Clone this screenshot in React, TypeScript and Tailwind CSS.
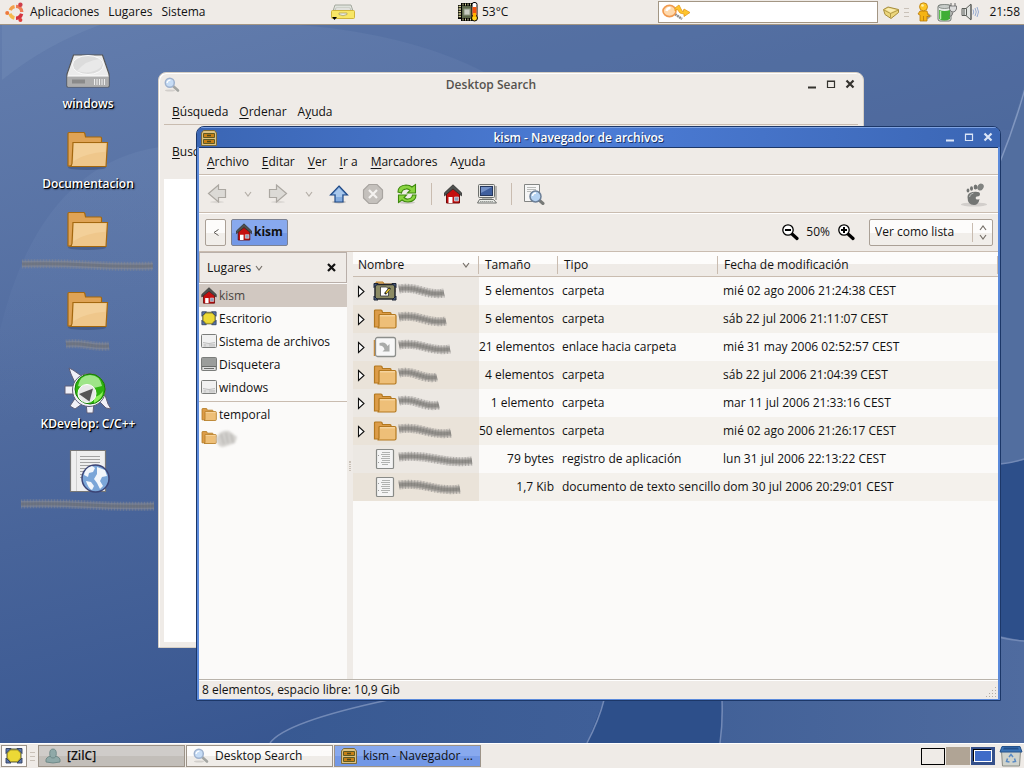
import { useState } from "react";
import type { ReactNode } from "react";

type IconProps = { className?: string };

/* ---------- icons ---------- */

function UbuntuLogo() {
  return (
    <svg viewBox="0 0 20 20" className="size-5" aria-hidden="true">
      <g fill="none" strokeWidth="3.4">
        <path d="M5.2 8.2A6 6 0 0 1 9.6 4.6" stroke="#f3a04a" />
        <path d="M11 4.400A6 6 0 0 1 16.8 10" stroke="#ee7d55" />
        <path d="M16.6 11.8A6 6 0 0 1 11 16.2" stroke="#d5333f" />
        <path d="M9.4 16A6 6 0 0 1 5 11.6" stroke="#f5b94d" />
      </g>
      <circle cx="2.2" cy="11" r="2" fill="#ee7a3c" />
      <circle cx="15.4" cy="2.8" r="2.2" fill="#cf3f4a" />
      <circle cx="15.4" cy="18" r="2" fill="#e03f3a" />
    </svg>
  );
}

function DrawerIcon() {
  return (
    <svg viewBox="0 0 24 16" className="h-4 w-6" aria-hidden="true">
      <path d="M4 1h16l2 6H2z" fill="#dfe3dc" stroke="#a5a99f" />
      <path d="M5 4h14l1 2H4z" fill="#fafafa" stroke="#a8a8a0" strokeWidth=".6" />
      <rect x=".5" y="6.500" width="23" height="8" rx="1" fill="#f8e665" stroke="#d0b43a" />
      <path d="M8 9h8v1.500q-4 2.500-8 0z" fill="#e9ebe4" stroke="#a69a50" strokeWidth=".7" />
      <path d="M1 13h5l-2.500 3z" fill="#000" />
    </svg>
  );
}

function CpuIcon() {
  return (
    <svg viewBox="0 0 22 20" className="h-5 w-[22px]" aria-hidden="true">
      <rect x="1" y="3" width="15" height="14" fill="#000" />
      <path d="M1.500 4.500h3M1.500 7h3M1.500 9.500h3M1.500 12h3M1.500 14.500h3" stroke="#d8d49a" strokeWidth="1.400" />
      <rect x="4" y="1" width="12" height="18" fill="#000" />
      <path d="M6 1.500v2M8.500 1.500v2M11 1.500v2M13.500 1.500v2M6 16.500v2M8.500 16.500v2M11 16.500v2M13.500 16.500v2" stroke="#d8d49a" />
      <rect x="5" y="4" width="10.500" height="12" fill="#5c684a" />
      <rect x="7" y="7" width="6" height="6" fill="#c9cdc2" stroke="#8c947f" />
      <rect x="15" y=".5" width="5" height="15" rx="2" fill="#fff" stroke="#000" />
      <path d="M17.500 5v9" stroke="#f0540f" strokeWidth="4" />
      <circle cx="17.500" cy="16" r="3" fill="#ffd21a" stroke="#000" />
      <path d="M17.500 11v4" stroke="#ffb300" strokeWidth="3" />
    </svg>
  );
}

function DeskbarIcon() {
  return (
    <svg viewBox="0 0 30 18" className="h-[18px] w-[30px]" aria-hidden="true">
      <path d="M13 11l7 5" stroke="#8d8d8d" strokeWidth="2.500" strokeDasharray="2 .6" />
      <ellipse cx="7.500" cy="8" rx="6.500" ry="5.600" fill="#ffd9ac" stroke="#f09a50" strokeWidth="1.600" />
      <path d="M4.500 8a4 4 0 0 1 4-3" stroke="#fff" strokeWidth="2.500" fill="none" />
      <path d="M13 5l4-3 2 4 2 3 1-3 6 3.500-6 4v-2.500l-4-1-3-4-2 2z" fill="#ffc62e" stroke="#e59a1c" strokeWidth=".8" />
    </svg>
  );
}

function EnvelopeIcon() {
  return (
    <svg viewBox="0 0 16 13" className="h-[13px] w-4" aria-hidden="true">
      <path d="M.5 3.500L5 1l10.500 2.500v3L8 12.500 2 8.500z" fill="#ecd67c" stroke="#a58c3c" />
      <path d="M1 4l6.500 3.500 8-3.500M7.500 7.500v4" fill="none" stroke="#a58c3c" strokeWidth=".8" />
      <path d="M2.500 3.500L5.500 2l7.500 2-5.500 2.500z" fill="#f9ecb0" />
    </svg>
  );
}

function PersonIcon() {
  return (
    <svg viewBox="0 0 16 20" className="h-5 w-4" aria-hidden="true">
      <path d="M6 19q5-1 9-5l-4-3z" fill="#8b8578" opacity=".7" />
      <path d="M3 9h7l1 4 2 1-2 1-1-1v5H3v-6l-2-1z" fill="#f5b414" stroke="#b8790a" strokeWidth=".8" />
      <circle cx="6.500" cy="4.800" r="4" fill="#fdc625" stroke="#b8790a" strokeWidth=".8" />
      <circle cx="5.500" cy="3.500" r="1.300" fill="#fff1a8" />
      <path d="M6.500 14v5" stroke="#c4860c" />
    </svg>
  );
}

function BatteryIcon() {
  return (
    <svg viewBox="0 0 20 20" className="size-5" aria-hidden="true">
      <rect x="1" y="3" width="13" height="16" rx="2" fill="#e9ebe9" stroke="#6f7670" />
      <path d="M2 8q5.500 2 11 0v9q-5.500 3-11 0z" fill="#3fae35" />
      <path d="M3.500 9v8" stroke="#b8efac" strokeWidth="1.500" />
      <ellipse cx="7.500" cy="4.500" rx="6" ry="2" fill="#c8ccc9" stroke="#6f7670" strokeWidth=".7" />
      <path d="M14 1v3M18 1v3" stroke="#666" />
      <path d="M12.500 4h7v3q-1 3-3.500 3t-3.500-3z" fill="#dcdcdc" stroke="#666" strokeWidth=".8" />
      <path d="M16 10q0 4-4 5" fill="none" stroke="#777" />
    </svg>
  );
}

function SpeakerIcon() {
  return (
    <svg viewBox="0 0 18 18" className="size-[18px]" aria-hidden="true">
      <path d="M1 5.500h4l5-4.500v16l-5-4.500H1z" fill="#e2e4e1" stroke="#5a5d58" />
      <path d="M3 6v6M5.500 5.500v7M10 2v14" stroke="#5a5d58" />
      <path d="M12 6.500q1.500 2.500 0 5M14 5q2.500 4 0 8M16 4q3 5 0 10" fill="none" stroke="#8ba3cd" strokeWidth=".9" />
    </svg>
  );
}

function DriveIcon() {
  return (
    <svg viewBox="0 0 48 48" className="size-12" aria-hidden="true">
      <path d="M9.500 8h29L45 27v12q0 1-1 1H4q-1 0-1-1V27z" fill="#ececec" stroke="#565656" strokeWidth="1.200" />
      <ellipse cx="24" cy="18" rx="15.500" ry="9.500" fill="#dcdcdc" stroke="#fafafa" />
      <path d="M13 24Q22 13 36 12q4 5 0 9-10 7-23 3z" fill="#e9e9e9" />
      <path d="M3.500 29h41v10.500h-41z" fill="#aeaeae" />
      <path d="M3.500 29h41" stroke="#fff" />
      <path d="M8 32.500h13v4H8z" fill="#8a8a8a" />
      <path d="M30.500 32v6M33 32v6M35.500 32v6M38 32v6M40.500 32v6" stroke="#eee" />
    </svg>
  );
}

function FolderIcon({ className }: IconProps) {
  return (
    <svg viewBox="0 0 48 48" className={className} aria-hidden="true">
      <ellipse cx="23" cy="40.500" rx="19" ry="2.500" fill="#20304f" opacity=".3" />
      <path d="M4 39V6.500q0-1 1-1h14.500q1 0 1.300 1l.7 3.500H36.500q1 0 1 1V39z" fill="#dfa355" stroke="#a4680f" strokeWidth="1.200" />
      <path d="M9 15.500h34.500L42 39.500H5.500q2.500-1 2.500-3z" fill="#efc78b" stroke="#a4680f" strokeWidth="1.200" />
      <path d="M10 16.800h32l-.6 8Q22 26 9.500 34z" fill="#f5d5a3" opacity=".6" />
    </svg>
  );
}

function SmallFolder({ className }: IconProps) {
  return (
    <svg viewBox="0 0 24 22" className={className} aria-hidden="true">
      <path d="M1.500 19V3q0-1 1-1H8q1 0 1 1l.5 1.500H17q1 0 1 1V19z" fill="#dc9c48" stroke="#b3781f" strokeWidth="1.200" />
      <path d="M6.500 6.500h15q1.500 0 1.500 1.500V18.500q0 1.500-1.500 1.500H4.500Q6 19.500 6 18V7z" fill="#eebf78" stroke="#b3781f" strokeWidth="1.200" />
      <path d="M7 7.800h15" stroke="#f9dcae" />
    </svg>
  );
}

function KDevelopIcon() {
  return (
    <svg viewBox="0 0 48 48" className="size-12" aria-hidden="true">
      <g fill="#f1f1f8" stroke="#5f5f78" strokeWidth="1">
        <path d="M5 1l4 2 10 7-7 8L7 7z" />
        <path d="M1 19h11v8H1z" />
        <path d="M12 30l6 7-7 5-5-3z" />
        <path d="M22 35h8l-1 11h-6z" />
        <path d="M34 33l7-5 3 9 3 5-5-1z" />
        <circle cx="25" cy="23" r="16.500" />
      </g>
      <circle cx="26" cy="22" r="15" fill="#2db30e" stroke="#157a06" />
      <path d="M14 19q2-11 12-11t12 11q-12 4-24 0z" fill="#c4f5b2" opacity=".75" />
      <path d="M30 36q9-4 9-12-3 5-9 6z" fill="#8bef5a" />
      <circle cx="23" cy="26.500" r="9" fill="#e8e8e8" stroke="#fff" />
      <path d="M15 27L29 21.500 25.500 34.500z" fill="#555" />
    </svg>
  );
}

function WebDocIcon() {
  return (
    <svg viewBox="0 0 48 48" className="size-12" aria-hidden="true">
      <path d="M6.500 3.500h35v41h-35z" fill="#efefef" stroke="#777" strokeWidth="1.200" />
      <path d="M12.500 4v40" stroke="#cfcfcf" />
      <path d="M16 9.500h20M16 12.500h20M16 15.500h20M16 18.500h20M16 21.500h20M16 24.500h12M16 27.500h10M16 30.500h9" stroke="#a3a3a3" />
      <circle cx="31.500" cy="31.500" r="13.500" fill="#7ba6d8" stroke="#3b4476" strokeWidth="1.500" />
      <path d="M20 28q1-7 8-9l3 2-2 4-4 1-1 4zM33 20l8 3 2 6-5 1-2 4 3 5-3 3-3-6-3-4 3-5zM22 34l5 1 3 4-2 4q-4-2-6-9z" fill="#f2f6fb" />
    </svg>
  );
}

function SearchIcon({ className }: IconProps) {
  return (
    <svg viewBox="0 0 16 16" className={className} aria-hidden="true">
      <ellipse cx="6" cy="13.500" rx="5" ry="1" fill="#000" opacity=".12" />
      <path d="M9 9l5 4.500" stroke="#a3a5a2" strokeWidth="2.600" strokeLinecap="round" />
      <circle cx="5.800" cy="5.800" r="4.500" fill="#c6dcf5" stroke="#9fb2ce" strokeWidth="1.500" />
      <path d="M3 6q.5-3 3.500-3" stroke="#fff" strokeWidth="1.200" fill="none" />
    </svg>
  );
}

function CabinetIcon({ className }: IconProps) {
  return (
    <svg viewBox="0 0 16 16" className={className} aria-hidden="true">
      <path d="M2.500.5h11L15.500 3v12.500H.5V3z" fill="#dcc282" stroke="#7d6a35" />
      <path d="M2.500 3.500h11v4h-11zM2.500 9.500h11v4h-11z" fill="#c77f14" stroke="#5f5a22" />
      <path d="M6 5.500h4M6 11.500h4" stroke="#4d4a1c" strokeWidth="1.500" />
    </svg>
  );
}

function HouseIcon({ className }: IconProps) {
  return (
    <svg viewBox="0 0 18 20" className={className} aria-hidden="true">
      <path d="M2.500 9L9 3.500 15.500 9v10h-13z" fill="#c40f0f" stroke="#6e0808" />
      <path d="M9 .8l8.500 8v3L9 5 .5 11.800v-3z" fill="#4e504e" stroke="#2c2d2c" strokeWidth=".8" />
      <path d="M4.500 13h4v6h-4z" fill="#fff" />
      <path d="M10.500 13h4v4h-4z" fill="#8da2bf" stroke="#dedede" strokeWidth=".7" />
    </svg>
  );
}

function DesktopIcon({ className }: IconProps) {
  return (
    <svg viewBox="0 0 18 16" className={className} aria-hidden="true">
      <path d="M2 1h14v13H2z" fill="#969a6c" stroke="#55583c" />
      <path d="M1 .5h5L1 5.500zM12 .5h5v5zM1 10l5 5H1zM17 10v5h-5z" fill="#5c77ab" stroke="#2f3d5c" strokeWidth=".9" />
      <path d="M5.500 2h7L15.500 5v5l-3 3.500h-7l-3-3.500V5z" fill="#ecd936" stroke="#9b8e24" strokeWidth=".8" />
    </svg>
  );
}

function DiskIcon({ dark = false }: { dark?: boolean }) {
  return (
    <svg viewBox="0 0 16 15" className="h-[15px] w-4" aria-hidden="true">
      <rect x=".5" y=".5" width="15" height="13" rx="1" fill={dark ? "#9b9d9b" : "#f1f1f1"} stroke="#7b7d7b" />
      <path d="M1.500 9.500h13V13h-13z" fill="#dedede" />
      {dark ? (
        <path d="M1 9.500h14M3 11.500h10" stroke="#6a6c6a" />
      ) : (
        <path d="M2 8.500q6 2 12 0M9 10v2.500M11 10v2.500M13 10v2.500M4 10v2.500" fill="none" stroke="#bdbdbd" />
      )}
    </svg>
  );
}

function DesktopFolderIcon({ className }: IconProps) {
  return (
    <svg viewBox="0 0 24 22" className={className} aria-hidden="true">
      <path d="M3 4V2h7l1 2h11v8" fill="#e3ad62" stroke="#bd8531" />
      <rect x="2" y="4.500" width="20" height="14.500" fill="#8c8b64" stroke="#20242c" strokeWidth="1.500" />
      <path d="M1 3.500h4l-4 4zM23 3.500h-4l4 4zM1 20h4l-4-4zM23 20h-4l4-4z" fill="#46587d" stroke="#1c2535" />
      <path d="M7.500 7h6l2 2v7h-8z" fill="#fff" stroke="#333" strokeWidth=".8" />
      <path d="M12 14l5-6" stroke="#222" strokeWidth="2.500" />
      <path d="M13 13l3.500-4" stroke="#f5d22c" strokeWidth="1.200" />
    </svg>
  );
}

function LinkIcon({ className }: IconProps) {
  return (
    <svg viewBox="0 0 24 22" className={className} aria-hidden="true">
      <path d="M1.500 4v16" stroke="#c98a34" strokeWidth="1.500" />
      <rect x="2.500" y="1.500" width="20" height="19" rx="2" fill="#f7f7f7" stroke="#8d8f8c" strokeWidth="1.300" />
      <path d="M6.500 7q6-2 8 3l2-2v7.500H9.500l2-2q-1-4-5-4z" fill="#a9aba9" />
    </svg>
  );
}

function TextFileIcon({ className }: IconProps) {
  return (
    <svg viewBox="0 0 24 22" className={className} aria-hidden="true">
      <rect x="3.500" y="1.500" width="17" height="19" rx="1" fill="#f4f4f4" stroke="#888a87" strokeWidth="1.200" />
      <path d="M9 4.500h8M8 6.500h9M9 8.500h8M8 10.500h9M9 12.500h8M8 14.500h9M9 16.500h6" stroke="#b0b2b0" />
      <path d="M5.500 7v1M5.500 14v1" stroke="#999" />
    </svg>
  );
}

function ArrowIcon({ dir }: { dir: "left" | "right" }) {
  return (
    <svg viewBox="0 0 20 20" className="size-5" aria-hidden="true">
      <ellipse cx="10" cy="18" rx="7" ry="1.200" fill="#000" opacity=".08" />
      <path
        d={dir === "left" ? "M1.500 9.500L11.500 1v4.500h7v8h-7V18z" : "M18.500 9.500L8.500 1v4.500h-7v8h7V18z"}
        fill="#dcdad6"
        stroke="#aba7a1"
        strokeWidth="1.200"
      />
    </svg>
  );
}

function ChevronDown({ className }: IconProps) {
  return (
    <svg viewBox="0 0 8 6" className={className} aria-hidden="true">
      <path d="M1 1l3 4 3-4" fill="none" stroke="currentColor" strokeWidth="1.200" />
    </svg>
  );
}

function UpIcon() {
  return (
    <svg viewBox="0 0 20 20" className="size-5" aria-hidden="true">
      <ellipse cx="10" cy="18" rx="7" ry="1.500" fill="#000" opacity=".2" />
      <path d="M10 2l8.500 9H14v7H6v-7H1.500z" fill="#82abdf" stroke="#204a87" strokeWidth="1.200" />
      <path d="M10 4l5.500 6H13v3H7v-3H4.500z" fill="#a9c8ec" />
    </svg>
  );
}

function StopIcon() {
  return (
    <svg viewBox="0 0 22 22" className="size-[22px]" aria-hidden="true">
      <path d="M7 1.500h8l5.500 5.500v8L15 20.500H7L1.500 15V7z" fill="#c4c0bc" stroke="#a8a4a0" strokeWidth="1.200" />
      <path d="M7 7l8 8M15 7l-8 8" stroke="#f4f2f0" strokeWidth="2.200" />
    </svg>
  );
}

function ReloadIcon() {
  return (
    <svg viewBox="0 0 22 22" className="size-[22px]" aria-hidden="true">
      <ellipse cx="11" cy="19.500" rx="8" ry="1.500" fill="#000" opacity=".15" />
      <g fill="#8ad441" stroke="#3e8a0c" strokeWidth="1.100">
        <path d="M2 9q0-6.500 8-7 4 0 6 2l3.500-2.500V10h-8L14 7.500q-2-2-4-1.500-4 .5-4.500 4z" />
        <path d="M20 12q0 6.500-8 7-4 0-6-2l-3.500 2.500V12h8L8 14.500q2 2 4 1.500 4-.5 4.500-4z" />
      </g>
    </svg>
  );
}

function ComputerIcon() {
  return (
    <svg viewBox="0 0 22 22" className="size-[22px]" aria-hidden="true">
      <rect x="2.500" y="1.500" width="16" height="13" rx="1" fill="#e6e6e3" stroke="#6d6f6c" />
      <rect x="4.500" y="3.500" width="12" height="9" fill="#3f5f9e" stroke="#26375c" />
      <path d="M5 4h11L5 10z" fill="#7390c6" />
      <path d="M6 15h10v2H6z" fill="#b5b7b4" />
      <path d="M3.500 16.500h14l3 3.500h-19z" fill="#eceeea" stroke="#6d6f6c" />
      <path d="M4 18.500h13" stroke="#9a9c99" strokeDasharray="1.500 .5" />
      <path d="M20 3v14" stroke="#7a7c79" />
    </svg>
  );
}

function FindFileIcon() {
  return (
    <svg viewBox="0 0 22 22" className="size-[22px]" aria-hidden="true">
      <path d="M1.500 1.500h15v17h-15z" fill="#f6f6f6" stroke="#838583" />
      <path d="M4 4.500h9M4 6.500h9M4 8.500h4" stroke="#b9bbb9" />
      <path d="M16 17l4 3.500" stroke="#777977" strokeWidth="3" strokeLinecap="round" />
      <circle cx="12.500" cy="13.500" r="5.500" fill="#b4d2f2" stroke="#6c7f97" strokeWidth="1.500" />
      <path d="M9.500 13q.5-3 3.500-3" stroke="#fff" fill="none" strokeWidth="1.300" />
    </svg>
  );
}

function FootIcon() {
  return (
    <svg viewBox="0 0 30 26" className="h-[26px] w-[30px]" aria-hidden="true">
      <ellipse cx="15" cy="23.500" rx="13" ry="2" fill="#000" opacity=".12" />
      <ellipse cx="21.500" cy="6" rx="3" ry="3.600" transform="rotate(35 21.500 6)" fill="#818381" />
      <ellipse cx="16.500" cy="6" rx="1.800" ry="2.600" fill="#737573" />
      <ellipse cx="12.500" cy="7.500" rx="1.500" ry="2.200" fill="#737573" />
      <ellipse cx="9" cy="9.500" rx="1.400" ry="1.900" fill="#737573" />
      <path d="M8.500 16q0-4 5-5 7.500-1 7.500 2 0 2.500-3 2.500-2 .5-1 2.500 1.500 1 3.500 0-1 6-5.500 6-6.500 0-6.500-8z" fill="#737573" />
      <path d="M10.500 16q0-3 4-4" stroke="#b9bbb9" fill="none" />
    </svg>
  );
}

function ZoomGlyph({ plus = false }: { plus?: boolean }) {
  return (
    <svg viewBox="0 0 18 18" className="size-[18px]" aria-hidden="true">
      <path d="M10.500 10.500l5.500 5" stroke="#000" strokeWidth="3.200" strokeLinecap="round" />
      <circle cx="7" cy="7" r="5.200" fill="#fff" stroke="#000" strokeWidth="1.300" />
      <path d={plus ? "M4 7h6M7 4v6" : "M4 7h6"} stroke="#000" strokeWidth="2" />
    </svg>
  );
}

function BuddyIcon() {
  return (
    <svg viewBox="0 0 16 16" className="size-4" aria-hidden="true">
      <path d="M1 14q-1-5 5-6h4q6 1 5 6-7 2-14 0z" fill="#8fa9a8" stroke="#668180" strokeWidth=".8" />
      <ellipse cx="8" cy="5.500" rx="3.300" ry="4.500" fill="#8fa9a8" stroke="#668180" strokeWidth=".8" />
    </svg>
  );
}

function TrashIcon() {
  return (
    <svg viewBox="0 0 24 22" className="h-[22px] w-6" aria-hidden="true">
      <path d="M2.500 6h19l-1 15h-17z" fill="#d0d3cc" stroke="#898c86" />
      <path d="M3 1.500h18l2 5.500H1z" fill="#3b74b6" stroke="#24528c" />
      <path d="M5 2.500h14l.8 2H4z" fill="#24508b" />
      <path d="M10 12l2-2.500 2 2.500M15.500 13.500l1 3-3 .5M8.500 13.500l-1 3 3 .5" fill="none" stroke="#5a8bc4" strokeWidth="1.500" />
    </svg>
  );
}

/* scribbled-over names */
function Smudge({ width, wave = 2, tone = "#8b8986" }: { width: number; wave?: number; tone?: string }) {
  const d = `M2 ${8 - wave}Q${width * 0.25} ${8 - wave * 2} ${width * 0.5} 8T${width - 3} ${8 + wave}`;
  return (
    <svg width={width} height="16" viewBox={`0 0 ${width} 16`} role="img" aria-label="nombre oculto" className="block shrink-0 overflow-visible blur-[0.5px]">
      <path d={d} fill="none" stroke={tone} strokeWidth="9" opacity=".25" />
      <path d={d} fill="none" stroke={tone} strokeWidth="6" opacity=".6" />
      <path d={d} fill="none" stroke={tone} strokeWidth="9" strokeDasharray="1 2" opacity=".5" />
      <path d={d} fill="none" stroke="#4c4b48" strokeWidth="3" opacity=".25" />
    </svg>
  );
}

/* ---------- wallpaper ---------- */

function Wallpaper() {
  return (
    <svg viewBox="0 0 1024 768" preserveAspectRatio="none" className="absolute inset-0 size-full" aria-hidden="true">
      <defs>
        <linearGradient id="sky" x1="0" y1="0" x2=".35" y2="1">
          <stop offset="0" stopColor="#647eae" />
          <stop offset=".5" stopColor="#4f6a9e" />
          <stop offset="1" stopColor="#35548f" />
        </linearGradient>
        <linearGradient id="swell" x1="0" y1="0" x2="1" y2="0">
          <stop offset="0" stopColor="#385992" />
          <stop offset="1" stopColor="#3f5f98" />
        </linearGradient>
        <linearGradient id="side" x1="0" y1="0" x2="1" y2="0">
          <stop offset="0" stopColor="#426198" />
          <stop offset="1" stopColor="#4f6b9f" />
        </linearGradient>
        <linearGradient id="haze" x1="0" y1="0" x2="0" y2="1">
          <stop offset="0" stopColor="#6d87b5" stopOpacity=".35" />
          <stop offset="1" stopColor="#6d87b5" stopOpacity="0" />
        </linearGradient>
      </defs>
      <rect width="1024" height="768" fill="url(#sky)" />
      <path d="M2 80Q45 45 100 25H2z" fill="#7089b5" opacity=".5" />
      <path d="M0 330Q40 165 160 147V420H0z" fill="url(#haze)" />
      <path d="M300 25Q480 40 560 130H1024V25z" fill="#456399" opacity=".3" />
      <path d="M1024 85Q1013 125 1001 160V470h23z" fill="#526e9f" />
      <path d="M1026 85Q1015 125 1000 162" fill="none" stroke="#8197c0" strokeWidth="1.500" />
      <path d="M990 464q18 0 34-4v184H990z" fill="#2d4f8a" />
      <path d="M270 743Q295 718 385 700H604L587 743z" fill="url(#swell)" />
      <path d="M604 700L587 743H720L722 700z" fill="#2d4f8a" />
      <path d="M722 700L720 743H1024V641L990 634V700z" fill="url(#side)" />
      <path d="M270 743Q285 722 388 700M604 700Q599 720 587 743M722 700Q723 722 720 743M990 634Q1005 640 1024 641M990 464Q1005 465 1024 459" fill="none" stroke="#7289b6" strokeWidth="1.500" />
    </svg>
  );
}

/* ---------- shared bits ---------- */

function Mnemonic({ text, at = 0 }: { text: string; at?: number }) {
  return (
    <>
      {text.slice(0, at)}
      <span className="underline underline-offset-2">{text[at]}</span>
      {text.slice(at + 1)}
    </>
  );
}

function WindowButtons({ active = false }: { active?: boolean }) {
  const tone = active ? "text-[#dbe5f7]" : "text-[#35332f]";
  const glyphs: [string, ReactNode][] = [
    ["Minimizar", <path d="M0 7.500h8" strokeWidth="2" />],
    ["Maximizar", <path d="M.5 1h7v6.500h-7zM0 1.500h8" strokeWidth="1.200" />],
    ["Cerrar", <path d="M.5.5l7 7M7.500.5l-7 7" strokeWidth="2.200" />],
  ];
  return (
    <div className={`flex ${tone}`}>
      {glyphs.map(([label, glyph]) => (
        <button key={label} type="button" aria-label={label} className="flex h-5 w-[19px] items-center justify-center">
          <svg viewBox="0 0 8 9" className="h-[9px] w-2 overflow-visible" fill="none" stroke="currentColor">
            {glyph}
          </svg>
        </button>
      ))}
    </div>
  );
}

function Grip() {
  return (
    <div className="flex w-[5px] flex-col gap-[3px]" aria-hidden="true">
      <span className="h-px bg-[#c9c1b8]" />
      <span className="h-px bg-[#c9c1b8]" />
      <span className="h-px bg-[#c9c1b8]" />
    </div>
  );
}

/* ---------- panels ---------- */

function TopPanel() {
  return (
    <header className="relative flex h-[25px] shrink-0 items-center border-b border-[#a39684] bg-[#efebe7]">
      <nav className="flex w-[331px] items-center gap-[9px] pl-[5px]">
        <button type="button" className="flex items-center gap-[5px]">
          <UbuntuLogo />
          Aplicaciones
        </button>
        <button type="button">Lugares</button>
        <button type="button">Sistema</button>
      </nav>
      <button type="button" aria-label="Cajón" className="w-[126px]">
        <DrawerIcon />
      </button>
      <div className="flex flex-1 items-center gap-[3px]">
        <CpuIcon />
        <span>53°C</span>
      </div>
      <div className="flex items-center gap-[5px] pr-1">
        <label className="flex h-[22px] w-[220px] items-center border border-[#a39684] bg-white pl-[3px]">
          <DeskbarIcon />
          <input aria-label="Buscar" className="min-w-0 flex-1 bg-transparent outline-none" />
        </label>
        <EnvelopeIcon />
        <Grip />
        <div className="flex items-center gap-[4px] pl-[3px]">
          <PersonIcon />
          <BatteryIcon />
          <SpeakerIcon />
        </div>
        <time className="pl-[5px]">21:58</time>
      </div>
    </header>
  );
}

function Taskbar() {
  const task = "flex h-[22px] w-[147px] items-center gap-[6px] border border-[#9c9388] px-[6px]";
  return (
    <footer className="relative flex h-[25px] shrink-0 items-center border-t border-white bg-[#efebe7] pl-px">
      <button type="button" aria-label="Mostrar el escritorio" className="flex h-[22px] w-[26px] items-center justify-center border border-[#9c9388] bg-[#fbfaf9]">
        <DesktopIcon className="h-4 w-[18px]" />
      </button>
      <div className="px-[3px]">
        <Grip />
      </div>
      <div className="flex flex-1 gap-px">
        <button type="button" className={`${task} bg-linear-to-b from-[#cfccc9] from-50% to-[#c2beb9] to-50% font-semibold`}>
          <BuddyIcon />
          [ZilC]
        </button>
        <button type="button" className={`${task} bg-linear-to-b from-[#fcfbfa] from-50% to-[#efece8] to-50%`}>
          <SearchIcon className="size-4" />
          Desktop Search
        </button>
        <button type="button" className={`${task} bg-linear-to-b from-[#88a9ee] from-50% to-[#7398e6] to-50%`}>
          <CabinetIcon className="size-4 shrink-0" />
          kism - Navegador ...
        </button>
      </div>
      <div className="flex items-center gap-px pr-px">
        <button type="button" aria-label="Área de trabajo 1" className="h-[17px] w-6 border border-black bg-[#efebe7]" />
        <button type="button" aria-label="Área de trabajo 2" className="h-[18px] w-6 bg-[#b0a495]" />
        <button type="button" aria-label="Área de trabajo 3" className="flex h-[18px] w-6 items-center justify-center bg-[#35508a]">
          <span className="h-3 w-[18px] border border-white bg-[#3f6cc8] shadow-[-1px_-1px_0_#000]" />
        </button>
        <button type="button" aria-label="Papelera" className="ml-[3px]">
          <TrashIcon />
        </button>
      </div>
    </footer>
  );
}

/* ---------- desktop ---------- */

const SHORTCUTS: { label: string; smudge?: number; icon: ReactNode }[] = [
  { label: "windows", icon: <DriveIcon /> },
  { label: "Documentacion", icon: <FolderIcon className="size-12" /> },
  { label: "", smudge: 136, icon: <FolderIcon className="size-12" /> },
  { label: "", smudge: 48, icon: <FolderIcon className="size-12" /> },
  { label: "KDevelop: C/C++", icon: <KDevelopIcon /> },
  { label: "", smudge: 138, icon: <WebDocIcon /> },
];

function Shortcuts() {
  return (
    <ul className="relative w-44 pt-[22px]">
      {SHORTCUTS.map((s, i) => (
        <li key={i} className="flex h-20 flex-col items-center">
          {s.icon}
          {s.smudge ? (
            <div className="pt-[2px]">
              <Smudge width={s.smudge} wave={1} tone="#858993" />
            </div>
          ) : (
            <span className="leading-[18px] font-semibold text-white [text-shadow:1px_1px_0_#000,1px_1px_2px_#000]">{s.label}</span>
          )}
        </li>
      ))}
    </ul>
  );
}

function SearchWindow() {
  return (
    <section aria-label="Desktop Search" className="absolute top-[47px] right-[160px] bottom-[95px] left-[158px] flex flex-col rounded-t-lg border border-[#d6cfc5] bg-[#efebe7] px-[5px] pb-[5px] shadow-[inset_1px_1px_0_#fff]">
      <div className="-mr-px flex h-[23px] shrink-0 items-center">
        <SearchIcon className="size-4" />
        <h2 className="flex-1 text-center font-semibold text-[#55524e]">Desktop Search</h2>
        <WindowButtons />
      </div>
      <nav className="flex h-[29px] shrink-0 items-center gap-[11px] border-b border-[#c9bcb0] pt-[3px] pl-2">
        <button type="button"><Mnemonic text="Búsqueda" /></button>
        <button type="button"><Mnemonic text="Ordenar" /></button>
        <button type="button"><Mnemonic text="Ayuda" at={1} /></button>
      </nav>
      <div className="flex h-[54px] shrink-0 items-center pl-2">
        <span><Mnemonic text="Busc" /></span>
      </div>
      <div className="flex-1 bg-white" />
    </section>
  );
}

const MENUS: [string, number][] = [
  ["Archivo", 0],
  ["Editar", 0],
  ["Ver", 0],
  ["Ir a", 0],
  ["Marcadores", 0],
  ["Ayuda", 1],
];

function Toolbar() {
  const tool = "flex h-8 w-[34px] items-center justify-center";
  const drop = "flex h-8 w-[27px] items-center justify-center text-[#b5afa8]";
  return (
    <div className="flex h-[38px] shrink-0 items-center border-b border-[#c9bcb0] pl-px shadow-[inset_0_1px_0_#fff]">
      <button type="button" aria-label="Atrás" className={tool}><ArrowIcon dir="left" /></button>
      <button type="button" aria-label="Historial atrás" className={drop}><ChevronDown className="h-[6px] w-2" /></button>
      <button type="button" aria-label="Adelante" className={tool}><ArrowIcon dir="right" /></button>
      <button type="button" aria-label="Historial adelante" className={drop}><ChevronDown className="h-[6px] w-2" /></button>
      <button type="button" aria-label="Subir" className={tool}><UpIcon /></button>
      <button type="button" aria-label="Detener" className={tool}><StopIcon /></button>
      <button type="button" aria-label="Recargar" className={tool}><ReloadIcon /></button>
      <span className="mr-[4px] ml-[7px] h-[22px] w-px bg-[#c9bcb0]" />
      <button type="button" aria-label="Carpeta personal" className={tool}><HouseIcon className="h-5 w-[18px]" /></button>
      <button type="button" aria-label="Equipo" className={tool}><ComputerIcon /></button>
      <span className="mr-[5px] ml-[7px] h-[22px] w-px bg-[#c9bcb0]" />
      <button type="button" aria-label="Buscar archivos" className={tool}><FindFileIcon /></button>
      <div className="ml-auto pr-[9px]"><FootIcon /></div>
    </div>
  );
}

function LocationBar() {
  const [view, setView] = useState("lista");
  return (
    <div className="flex h-[39px] shrink-0 items-center border-b border-[#c9bcb0] pr-[5px] pl-[6px] shadow-[inset_0_1px_0_#fff]">
      <button type="button" aria-label="Anterior" className="flex h-[27px] w-[21px] items-center justify-center rounded-xs border border-[#aaa096] bg-linear-to-b from-[#fdfcfb] from-50% to-[#f1eeea] to-50% text-[#5f5b56]">
        <svg viewBox="0 0 6 7" className="h-[7px] w-[6px]" fill="none" stroke="currentColor">
          <path d="M5.500.5L1 3.500l4.500 3" />
        </svg>
      </button>
      <button type="button" className="ml-[5px] flex h-[27px] items-center gap-[2px] rounded-xs border border-[#7c8293] bg-linear-to-b from-[#88a9ee] from-50% to-[#7398e6] to-50% px-[4px] font-bold">
        <HouseIcon className="h-[18px] w-4" />
        kism
      </button>
      <div className="ml-auto flex items-center gap-[7px]">
        <button type="button" aria-label="Reducir"><ZoomGlyph /></button>
        <span>50%</span>
        <button type="button" aria-label="Ampliar"><ZoomGlyph plus /></button>
      </div>
      <div className="relative ml-[14px] h-[27px] w-[124px] rounded-xs border border-[#aaa096] bg-linear-to-b from-[#fdfcfb] from-50% to-[#f1eeea] to-50%">
        <select
          aria-label="Modo de vista"
          value={view}
          onChange={(e) => setView(e.target.value)}
          className="size-full appearance-none bg-transparent pl-[5px] outline-none"
        >
          <option value="lista">Ver como lista</option>
          <option value="iconos">Ver como iconos</option>
        </select>
        <div className="pointer-events-none absolute inset-y-[3px] right-0 flex w-5 items-center justify-center border-l border-[#c9bcb0] text-[#77716a]">
          <svg viewBox="0 0 8 15" className="h-[15px] w-2" fill="none" stroke="currentColor" strokeWidth="1.200">
            <path d="M1 5l3-4 3 4M1 10l3 4 3-4" />
          </svg>
        </div>
      </div>
    </div>
  );
}

const PLACES: { label: string; icon: ReactNode }[] = [
  { label: "kism", icon: <HouseIcon className="h-[17px] w-4" /> },
  { label: "Escritorio", icon: <DesktopIcon className="h-[15px] w-4" /> },
  { label: "Sistema de archivos", icon: <DiskIcon /> },
  { label: "Disquetera", icon: <DiskIcon dark /> },
  { label: "windows", icon: <DiskIcon /> },
];

function Sidebar() {
  const row = "flex h-[23px] w-full items-center gap-[2px] pl-[2px]";
  return (
    <aside className="flex w-[148px] shrink-0 flex-col bg-[#fbfaf9]">
      <div className="flex h-[31px] shrink-0 items-center justify-between border border-[#b9afa9] bg-[#efebe7] pr-[10px] pl-[7px]">
        <button type="button" className="flex items-center gap-1">
          Lugares
          <ChevronDown className="h-[6px] w-2 text-[#77716a]" />
        </button>
        <button type="button" aria-label="Cerrar panel">
          <svg viewBox="0 0 9 9" className="size-[9px]" stroke="#111" strokeWidth="2.200">
            <path d="M1 1l7 7M8 1L1 8" />
          </svg>
        </button>
      </div>
      <ul className="border-b border-[#c9bcb0] pt-px pb-[2px]">
        {PLACES.map((p, i) => (
          <li key={p.label}>
            <button type="button" className={i === 0 ? `${row} bg-[#d1c8c1] text-[#4a4642]` : row}>
              {p.icon}
              {p.label}
            </button>
          </li>
        ))}
      </ul>
      <ul className="pt-px">
        <li>
          <button type="button" className={row}>
            <SmallFolder className="h-[15px] w-4" />
            temporal
          </button>
        </li>
        <li>
          <button type="button" className={row}>
            <SmallFolder className="h-[15px] w-4 shrink-0" />
            <svg viewBox="0 0 24 20" className="-ml-[4px] h-5 w-6 blur-[1px]" role="img" aria-label="nombre oculto">
              <path d="M1 10Q6 1 14 3l8 6-2 6-12 4q-6 0-7-9z" fill="#d3d1ce" />
              <path d="M6 6l3 10M11 5l2 10M16 6l2 9" stroke="#bab8b5" strokeWidth="1.500" />
            </svg>
          </button>
        </li>
      </ul>
    </aside>
  );
}

interface FileRow {
  kind: "desktop" | "folder" | "link" | "text";
  smudge: number;
  size: string;
  type: string;
  date: string;
}

const FILES: FileRow[] = [
  { kind: "desktop", smudge: 50, size: "5 elementos", type: "carpeta", date: "mié 02 ago 2006 21:24:38 CEST" },
  { kind: "folder", smudge: 52, size: "5 elementos", type: "carpeta", date: "sáb 22 jul 2006 21:11:07 CEST" },
  { kind: "link", smudge: 56, size: "21 elementos", type: "enlace hacia carpeta", date: "mié 31 may 2006 02:52:57 CEST" },
  { kind: "folder", smudge: 43, size: "4 elementos", type: "carpeta", date: "sáb 22 jul 2006 21:04:39 CEST" },
  { kind: "folder", smudge: 45, size: "1 elemento", type: "carpeta", date: "mar 11 jul 2006 21:33:16 CEST" },
  { kind: "folder", smudge: 57, size: "50 elementos", type: "carpeta", date: "mié 02 ago 2006 21:26:17 CEST" },
  { kind: "text", smudge: 78, size: "79 bytes", type: "registro de aplicación", date: "lun 31 jul 2006 22:13:22 CEST" },
  { kind: "text", smudge: 66, size: "1,7 Kib", type: "documento de texto sencillo", date: "dom 30 jul 2006 20:29:01 CEST" },
];

const FILE_ICONS = {
  desktop: DesktopFolderIcon,
  folder: SmallFolder,
  link: LinkIcon,
  text: TextFileIcon,
};

function FileTable() {
  const th = "border-b border-[#c9bcb0] bg-linear-to-b from-[#fdfcfb] from-50% to-[#efebe7] to-50% p-0 pt-px text-left font-normal";
  const label = "flex h-[18px] items-center justify-between border-r border-[#c9bcb0] pl-[6px]";
  return (
    <div className="min-w-0 flex-1 bg-[#fbfaf9]">
      <table className="w-full table-fixed border-separate border-spacing-0">
        <colgroup>
          <col className="w-[126px]" />
          <col className="w-[79px]" />
          <col className="w-[160px]" />
          <col />
        </colgroup>
        <thead>
          <tr className="h-[25px]">
            <th className={th}>
              <div className="flex h-[18px] items-center justify-between border-r border-[#c9bcb0] pr-2 pl-[5px]">
                Nombre
                <ChevronDown className="h-[6px] w-2 text-[#77716a]" />
              </div>
            </th>
            <th className={th}><div className={label}>Tamaño</div></th>
            <th className={th}><div className={label}>Tipo</div></th>
            <th className={th}><div className={label}>Fecha de modificación</div></th>
          </tr>
        </thead>
        <tbody>
          {FILES.map((f, i) => {
            const Icon = FILE_ICONS[f.kind];
            return (
              <tr key={f.date} className="h-7 whitespace-nowrap even:bg-[#f4f1ec]">
                <td className={i % 2 ? "bg-[#eae3d9] p-0" : "bg-[#ece8e3] p-0"}>
                  <div className="flex items-center">
                    <span className="flex w-5 shrink-0 pl-[4px]">
                      {f.kind !== "text" && (
                        <svg viewBox="0 0 8 13" className="h-[13px] w-2" fill="#fff" stroke="#111" strokeWidth="1.100">
                          <path d="M1.500 1.500L7 6.500l-5.500 5z" />
                        </svg>
                      )}
                    </span>
                    <Icon className="h-[22px] w-6 shrink-0" />
                    <Smudge width={f.smudge} />
                  </div>
                </td>
                <td className="p-0 pr-[4px] text-right">{f.size}</td>
                <td className="p-0 pl-[4px]">{f.type}</td>
                <td className="p-0 pl-[5px]">{f.date}</td>
              </tr>
            );
          })}
        </tbody>
      </table>
    </div>
  );
}

function FileManager() {
  return (
    <section aria-label="kism - Navegador de archivos" className="absolute top-[101px] right-[23px] bottom-[42px] left-[196px] flex flex-col overflow-hidden rounded-t-lg border border-[#1c3768] bg-[#5b8adb]">
      <div className="flex h-5 shrink-0 items-center border-t border-[#7fa3e2] bg-linear-to-r from-[#3b66b4] via-[#4c7cd6] to-[#3b66b4] pr-[3px] pl-1">
        <CabinetIcon className="size-4" />
        <h2 className="flex-1 text-center font-semibold text-white [text-shadow:1px_1px_0_#1d3566]">kism - Navegador de archivos</h2>
        <WindowButtons active />
      </div>
      <div className="mx-[2px] mb-px flex min-h-0 flex-1 flex-col border-t border-[#1c3768] bg-[#efebe7]">
        <nav className="flex h-[27px] shrink-0 items-center gap-[13px] border-b border-[#c9bcb0] pt-[2px] pl-2">
          {MENUS.map(([text, at]) => (
            <button key={text} type="button"><Mnemonic text={text} at={at} /></button>
          ))}
        </nav>
        <Toolbar />
        <LocationBar />
        <div className="flex min-h-0 flex-1 border-b border-[#b9b3ab]">
          <Sidebar />
          <div className="flex w-[6px] shrink-0 items-center justify-center">
            <span className="h-[10px] w-[2px] border-x border-dotted border-[#c9c1b8]" />
          </div>
          <FileTable />
        </div>
        <div className="flex h-[19px] shrink-0 items-center justify-between border-t border-white pl-[3px]">
          <span>8 elementos, espacio libre: 10,9 Gib</span>
          <svg viewBox="0 0 12 12" className="size-3 self-end" fill="#b5ada3" aria-hidden="true">
            <path d="M9 0h1v1H9zM9 3h1v1H9zM6 3h1v1H6zM9 6h1v1H9zM6 6h1v1H6zM3 6h1v1H3zM9 9h1v1H9zM6 9h1v1H6zM3 9h1v1H3zM0 9h1v1H0z" />
          </svg>
        </div>
      </div>
    </section>
  );
}

export default function App() {
  return (
    <div className="relative flex h-screen min-h-[600px] w-full flex-col overflow-hidden bg-[#4d699e] font-['Open_Sans','Noto_Sans',sans-serif] text-[12px] leading-4 text-[#111]">
      <Wallpaper />
      <TopPanel />
      <main className="relative flex-1">
        <Shortcuts />
        <SearchWindow />
        <FileManager />
      </main>
      <Taskbar />
    </div>
  );
}
